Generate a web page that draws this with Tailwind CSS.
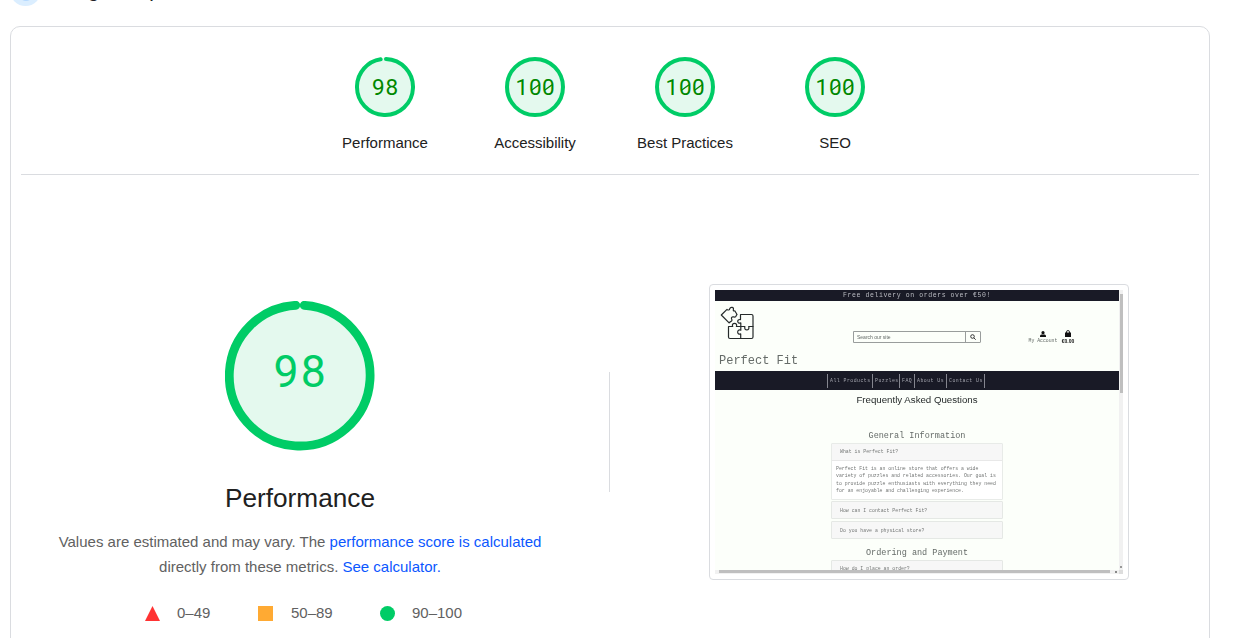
<!DOCTYPE html>
<html lang="en">
<head>
<meta charset="utf-8">
<title>PageSpeed Insights</title>
<script src="https://cdn.jsdelivr.net/npm/@tailwindcss/browser@4"></script>
</head>
<body class="h-[638px] w-[1241px] overflow-hidden bg-white font-['Liberation_Sans',Arial,sans-serif] text-[#212121]">
  <header class="flex h-[26px] items-start overflow-hidden pl-[10px]">
    <div class="-mt-[25px] flex h-[31px] w-[31px] shrink-0 items-center justify-center rounded-full bg-[#dbeeff]"><div class="h-[21px] w-[14px] rounded-full bg-[#b5d9ff]"></div></div>
    <h1 class="-mt-[22px] ml-[16px] text-[20.5px] leading-[24px] font-medium whitespace-nowrap text-[#202124]">Diagnose performance issues</h1>
  </header>

  <main class="ml-[10px] h-[640px] w-[1200px] rounded-t-[10px] border border-[#dadce0]">
    <section class="mx-[10px] flex h-[148px] justify-center border-b border-[#dadce0] pt-[30px]">
      <div class="-ml-[1px] flex text-[15px] leading-[18px]">
        <div class="flex w-[150px] flex-col items-center gap-[17px]">
          <svg class="size-[60px]" viewBox="0 0 60 60"><circle cx="30" cy="30" r="29" fill="#e4f9ee"/><circle cx="30" cy="30" r="28" fill="none" stroke="#0c6" stroke-width="4" stroke-linecap="round" stroke-dasharray="170.3 5.63" transform="rotate(-88 30 30)"/><text y="38.2" font-family="Roboto" font-size="22.5" fill="#080"><tspan x="17">9</tspan><tspan x="30.4">8</tspan></text></svg>
          <span class="ml-px">Performance</span>
        </div>
        <div class="flex w-[150px] flex-col items-center gap-[17px]">
          <svg class="size-[60px]" viewBox="0 0 60 60"><circle cx="30" cy="30" r="28" fill="#e4f9ee" stroke="#0c6" stroke-width="4"/><text y="38.2" font-family="Roboto" font-size="22.5" fill="#080"><tspan x="10.5">1</tspan><tspan x="24">0</tspan><tspan x="37">0</tspan></text><path d="M26.5 33.2l7.6-5.4M39.5 33.2l7.6-5.4" stroke="#080" stroke-width="1.4"/></svg>
          <span class="ml-px">Accessibility</span>
        </div>
        <div class="flex w-[150px] flex-col items-center gap-[17px]">
          <svg class="size-[60px]" viewBox="0 0 60 60"><circle cx="30" cy="30" r="28" fill="#e4f9ee" stroke="#0c6" stroke-width="4"/><text y="38.2" font-family="Roboto" font-size="22.5" fill="#080"><tspan x="10.5">1</tspan><tspan x="24">0</tspan><tspan x="37">0</tspan></text><path d="M26.5 33.2l7.6-5.4M39.5 33.2l7.6-5.4" stroke="#080" stroke-width="1.4"/></svg>
          <span class="ml-px">Best Practices</span>
        </div>
        <div class="flex w-[150px] flex-col items-center gap-[17px]">
          <svg class="size-[60px]" viewBox="0 0 60 60"><circle cx="30" cy="30" r="28" fill="#e4f9ee" stroke="#0c6" stroke-width="4"/><text y="38.2" font-family="Roboto" font-size="22.5" fill="#080"><tspan x="10.5">1</tspan><tspan x="24">0</tspan><tspan x="37">0</tspan></text><path d="M26.5 33.2l7.6-5.4M39.5 33.2l7.6-5.4" stroke="#080" stroke-width="1.4"/></svg>
          <span class="ml-px">SEO</span>
        </div>
      </div>
    </section>

    <section class="flex items-start">
      <div class="flex w-[578px] flex-col items-center pt-[126px]">
        <svg class="size-[150px]" viewBox="0 0 150 150"><circle cx="74.7" cy="74.600" r="70" fill="#e4f9ee"/><circle cx="74.7" cy="74.600" r="70.4" fill="none" stroke="#0c6" stroke-width="8.8" stroke-linecap="round" stroke-dasharray="433.1 9.24" transform="rotate(-86.3 74.7 74.6)"/><text y="86.2" font-family="Roboto" font-size="44.5" fill="#0c6"><tspan x="48.5">9</tspan><tspan x="75.7">8</tspan></text></svg>
        <h2 class="mt-[31px] text-[26.2px] leading-[32px]">Performance</h2>
        <p class="mt-[15px] text-center text-[15px] leading-[25px] whitespace-nowrap text-[#616161]">Values are estimated and may vary. The <a class="text-[#0b57ff]">performance score is calculated</a><br>directly from these metrics. <a class="text-[#0b57ff]">See calculator.</a></p>
        <div class="mt-[24px] ml-[37px] flex items-center text-[15px] leading-[20px] text-[#616161]">
          <svg class="mr-[17px] size-[15px]" viewBox="0 0 15 15"><path d="M7.5 0L15 15H0z" fill="#f33"/></svg><span class="w-[81px]">0–49</span>
          <span class="mr-[18px] size-[15px] bg-[#fa3]"></span><span class="w-[89px]">50–89</span>
          <span class="mr-[17px] size-[15px] rounded-full bg-[#0c6]"></span><span class="w-[80px]">90–100</span>
        </div>
      </div>
      <div class="mt-[197px] ml-[20px] h-[120px] w-px bg-[#dadce0]"></div>
      <div class="mt-[109px] ml-[99px] h-[296px] w-[420px] rounded-[4px] border border-[#dadce0] p-[5px]">
        <div class="flex h-[284px] w-[408px] flex-col overflow-hidden bg-[#fcfffa] font-['Liberation_Mono','Courier_New',monospace] text-[#656b68] blur-[0.3px]">
          <div class="flex h-[280px]">
            <div class="w-[404px] shrink-0 overflow-hidden">
              <div class="flex h-[11px] items-center justify-center bg-[#191a26] text-[6.5px] leading-[11px] tracking-[0.58px] text-[#bbbcc3]">Free delivery on orders over €50!</div>
              <div class="flex h-[70px]">
                <div class="w-[138px] pl-[4px]">
                  <svg class="mt-[5px] ml-[1px] h-[36px] w-[36px]" viewBox="0 0 36 36" fill="none" stroke="#252a2a" stroke-width="1.2" stroke-linejoin="round" stroke-linecap="round"><path d="M1.300 9L7 3.300c1.200 1.200 2.700.8 2.700-.6C10.500.5 14 1 13.400 3.300c-.4 1.400.3 2 1.400 1.500L17 8.500c-1.200 1-.6 2-1.800 2.500-1.300.4-2.400-.8-3.500.3s.7 2 .2 3.300c-.6 1.300-2 .8-2.800 2.300z"/><path d="M20.500 8.500h11q1.500 0 1.500 1.500v21q0 1.500-1.500 1.500H10q-1.500 0-1.500-1.500V20.500h4.200c-2-4.300 5.600-4.300 3.700 0h4.400v-3.600c-3.700 1.700-4.400-4.200-.3-3.300z"/><path d="M20.800 20.500v3.700c-4-1.500-4.300 5-.1 3.700v4.600M20.800 20.500h4.100c-1.500 4.500 5.400 4.500 3.800 0H33"/></svg>
                  <div class="mt-[11px] text-[12px] leading-[16px] whitespace-nowrap">Perfect Fit</div>
                </div>
                <div class="mt-[30px] flex h-[12px] w-[128px] rounded-r-[1px] border border-[#999d9c] font-['Liberation_Sans',Arial,sans-serif]">
                  <div class="w-[111px] pl-[3px] text-[5px] leading-[11px]">Search our site</div>
                  <div class="flex flex-1 items-center justify-center border-l border-[#999d9c]"><svg class="size-[6px]" viewBox="0 0 6 6" fill="none" stroke="#222" stroke-width=".9"><circle cx="2.500" cy="2.500" r="1.800"/><path d="M3.900 3.900l1.800 1.800"/></svg></div>
                </div>
                <div class="mt-[28px] ml-[46px] flex gap-[2px] text-[4.800px] leading-[6px] whitespace-nowrap">
                  <div class="flex w-[32px] flex-col items-center"><svg class="mt-[2px] h-[6px] w-[6px]" viewBox="0 0 6 6" fill="#111"><circle cx="3" cy="1.700" r="1.600"/><path d="M0 6V5q0-1.400 1.400-1.500h3.200Q6 3.600 6 5v1z"/></svg><span class="mt-[1px]">My Account</span></div>
                  <div class="flex w-[14px] flex-col items-center text-[#111]"><svg class="mt-[1px] h-[7px] w-[6px]" viewBox="0 0 6 7"><path d="M0 2.500h6V7H0z" fill="#111"/><path d="M1.500 3V1.800q0-1.200 1.500-1.200t1.500 1.200V3" fill="none" stroke="#111" stroke-width=".9"/></svg><span class="mt-[1px] font-['Liberation_Sans',Arial,sans-serif] text-[5px] font-bold">€0.00</span></div>
                </div>
              </div>
              <nav class="flex h-[19px] items-center bg-[#191a26] pl-[112px] text-[4.85px] leading-[14px] tracking-[0.48px] whitespace-nowrap text-[#a4a5ae]">
                <span class="h-[14px] w-[45px] border-l border-[#85868f] pl-[2px]">All Products</span><span class="h-[14px] w-[27px] border-l border-[#85868f] pl-[2px]">Puzzles</span><span class="h-[14px] w-[15px] border-l border-[#85868f] pl-[2px]">FAQ</span><span class="h-[14px] w-[32px] border-l border-[#85868f] pl-[2px]">About Us</span><span class="h-[14px] w-[39px] border-x border-[#85868f] pl-[2px]">Contact Us</span>
              </nav>
              <div class="mt-[3px] text-center font-['Liberation_Sans',Arial,sans-serif] text-[9.7px] leading-[14px] text-[#252a2a]">Frequently Asked Questions</div>
              <div class="mt-[23px] text-center text-[8.5px] leading-[12px]">General Information</div>
              <div class="mx-auto mt-[1px] w-[172px] rounded-[1px] border border-[#e8ebe8] bg-white text-[4.85px] text-[#747776]">
                <div class="h-[17px] border-b border-[#e8e8e8] bg-[#f7f7f7] pl-[8px] leading-[16px]">What is Perfect Fit?</div>
                <p class="h-[38px] pt-[4px] pl-[4px] leading-[7.3px] whitespace-nowrap">Perfect Fit is an online store that offers a wide<br>variety of puzzles and related accessories. Our goal is<br>to provide puzzle enthusiasts with everything they need<br>for an enjoyable and challenging experience.</p>
              </div>
              <div class="mx-auto mt-[1px] h-[18px] w-[172px] rounded-[1px] border border-[#e5e8e5] bg-[#f7f7f7] pl-[8px] text-[4.85px] leading-[17px] text-[#747776]">How can I contact Perfect Fit?</div>
              <div class="mx-auto mt-[2px] h-[18px] w-[172px] rounded-[1px] border border-[#e5e8e5] bg-[#f7f7f7] pl-[8px] text-[4.85px] leading-[17px] text-[#747776]">Do you have a physical store?</div>
              <div class="mt-[8px] text-center text-[8.5px] leading-[12px]">Ordering and Payment</div>
              <div class="mx-auto mt-[1px] h-[18px] w-[172px] rounded-[1px] border border-[#e5e8e5] bg-[#f7f7f7] pl-[8px] text-[4.85px] leading-[16px] text-[#747776]">How do I place an order?</div>
            </div>
            <div class="flex flex-1 flex-col items-center bg-[#f1f1f1]"><div class="mt-[4px] h-[99px] w-[3px] bg-[#bfbfbf]"></div><div class="mt-[173px] size-[2px] bg-[#999]"></div></div>
          </div>
          <div class="flex h-[4px] items-start bg-[#f1f1f1]"><div class="ml-[4px] h-[3px] w-[391px] bg-[#bfbfbf]"></div><div class="mt-[1px] ml-[5px] size-[2px] bg-[#888]"></div><div class="ml-[2px] h-[4px] flex-1 bg-[#ddd]"></div></div>
        </div>
      </div>
    </section>
  </main>
</body>
</html>
